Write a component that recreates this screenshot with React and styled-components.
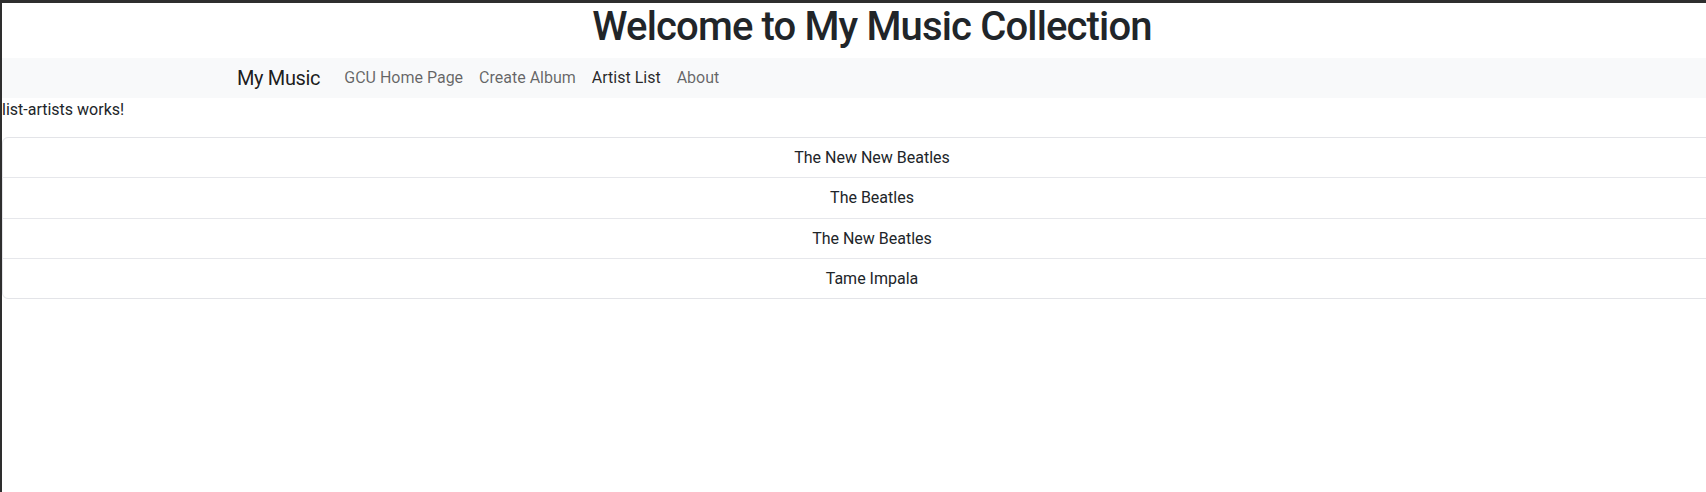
import React from 'react';
import styled, { createGlobalStyle } from 'styled-components';

const GlobalStyle = createGlobalStyle`
  html, body {
    margin: 0;
    padding: 0;
    background: #ffffff;
    overflow: hidden;
  }
  body {
    font-family: Roboto, "Noto Sans", "Liberation Sans", sans-serif;
    font-size: 16px;
    color: #212529;
  }
`;

const Frame = styled.div`
  height: 100vh;
  box-sizing: border-box;
  border-top: 3px solid #2e2e2e;
  border-left: 2px solid #2e2e2e;
  overflow: hidden;
`;

const Page = styled.div`
  width: 1740px;
`;

const Title = styled.h1`
  margin: 0 0 7px;
  font-size: 40px;
  font-weight: 500;
  line-height: 48px;
  letter-spacing: -0.85px;
  text-align: center;
  color: #212529;
`;

const Navbar = styled.nav`
  display: flex;
  align-items: center;
  height: 40px;
  padding-left: 235px;
  background-color: #f8f9fa;
`;

const Brand = styled.a`
  font-size: 20px;
  line-height: 30px;
  padding: 5px 0;
  margin-right: 16px;
  letter-spacing: -0.35px;
  color: rgba(0, 0, 0, 0.9);
  text-decoration: none;
`;

const NavLinks = styled.ul`
  display: flex;
  margin: 0;
  padding: 0;
  list-style: none;
`;

const NavLink = styled.a`
  display: block;
  padding: 8px;
  line-height: 24px;
  font-size: 16px;
  text-decoration: none;
  color: ${(p) => (p.$active ? 'rgba(0, 0, 0, 0.85)' : 'rgba(0, 0, 0, 0.6)')};
`;

const Note = styled.p`
  margin: 0 0 15px;
  line-height: 24px;
`;

const ListGroup = styled.ul`
  margin: 0;
  padding: 0;
  list-style: none;
  border: 1px solid #e3e4e8;
  border-radius: 6px;
`;

const ListItem = styled.li`
  padding: 8px 16px;
  line-height: 23.25px;
  text-align: center;
  color: #212529;
  & + & {
    border-top: 1px solid #e6e7eb;
  }
`;

const links = [
  { label: 'GCU Home Page' },
  { label: 'Create Album' },
  { label: 'Artist List', active: true },
  { label: 'About' },
];

const artists = ['The New New Beatles', 'The Beatles', 'The New Beatles', 'Tame Impala'];

const App = () => (
  <>
    <GlobalStyle />
    <Frame>
      <Page>
        <Title>Welcome to My Music Collection</Title>
        <Navbar>
          <Brand href="#">My Music</Brand>
          <NavLinks>
            {links.map((l) => (
              <li key={l.label}>
                <NavLink href="#" $active={l.active}>{l.label}</NavLink>
              </li>
            ))}
          </NavLinks>
        </Navbar>
        <Note>list-artists works!</Note>
        <ListGroup>
          {artists.map((a, i) => (
            <ListItem key={i}>{a}</ListItem>
          ))}
        </ListGroup>
      </Page>
    </Frame>
  </>
);

export default App;
